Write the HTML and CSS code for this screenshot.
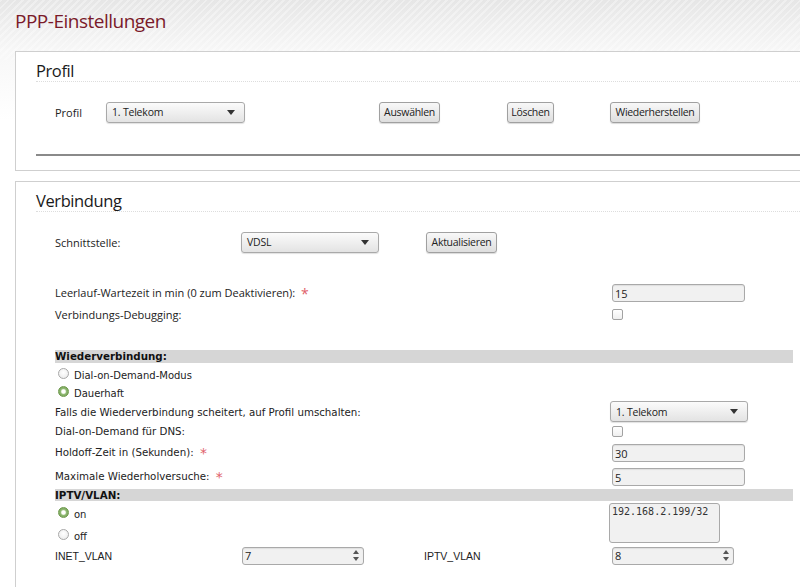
FILE: index.html
```html
<!DOCTYPE html>
<html lang="de">
<head>
<meta charset="utf-8">
<title>PPP-Einstellungen</title>
<link rel="stylesheet" href="styles.css">
</head>
<body>
<div class="page">
  <h1 class="title">PPP-Einstellungen</h1>

  <section class="box box-profil">
    <h2 class="box-head">Profil</h2>
    <div class="content">
      <div class="row row-profil">
        <span class="lbl">Profil</span>
        <div class="cell"><div class="select sel-profil"><span>1. Telekom</span><i class="arrow"></i></div></div>
        <div class="cell"><button class="btn btn-ausw">Auswählen</button></div>
        <div class="cell"><button class="btn btn-losch">Löschen</button></div>
        <div class="cell"><button class="btn btn-wied">Wiederherstellen</button></div>
      </div>
    </div>
    <div class="sep"></div>
  </section>

  <section class="box box-verb">
    <h2 class="box-head">Verbindung</h2>
    <div class="content">
      <div class="row row-schnitt">
        <span class="lbl">Schnittstelle:</span>
        <div class="cell"><div class="select sel-vdsl"><span>VDSL</span><i class="arrow"></i></div></div>
        <div class="cell"><button class="btn btn-akt">Aktualisieren</button></div>
      </div>

      <div class="row row-field row-leer">
        <span class="lbl">Leerlauf-Wartezeit in min (0 zum Deaktivieren): <span class="req">*</span></span>
        <div class="cell"><div class="input in-wide">15</div></div>
      </div>
      <div class="row row-field row-debug">
        <span class="lbl">Verbindungs-Debugging:</span>
        <div class="cell"><span class="check"></span></div>
      </div>

      <div class="bar bar-wieder">Wiederverbindung:</div>
      <div class="row row-radio r1 dv"><span class="radio"></span><span>Dial-on-Demand-Modus</span></div>
      <div class="row row-radio r2 dv"><span class="radio on"></span><span>Dauerhaft</span></div>

      <div class="row row-field row-falls dv">
        <span class="lbl">Falls die Wiederverbindung scheitert, auf Profil umschalten:</span>
        <div class="cell"><div class="select sel-falls"><span>1. Telekom</span><i class="arrow"></i></div></div>
      </div>
      <div class="row row-field row-dns dv">
        <span class="lbl">Dial-on-Demand für DNS:</span>
        <div class="cell"><span class="check"></span></div>
      </div>
      <div class="row row-field row-hold dv">
        <span class="lbl">Holdoff-Zeit in (Sekunden): <span class="req">*</span></span>
        <div class="cell"><div class="input in-wide">30</div></div>
      </div>
      <div class="row row-field row-max dv">
        <span class="lbl">Maximale Wiederholversuche: <span class="req">*</span></span>
        <div class="cell"><div class="input in-wide">5</div></div>
      </div>

      <div class="bar bar-iptv">IPTV/VLAN:</div>
      <div class="row row-iptv">
        <div class="radios">
          <div class="row-radio dv"><span class="radio on"></span><span>on</span></div>
          <div class="row-radio dv"><span class="radio"></span><span>off</span></div>
        </div>
        <div class="cell"><div class="textarea">192.168.2.199/32</div></div>
      </div>
      <div class="row row-vlan">
        <span class="lbl ar">INET_VLAN</span>
        <div class="cell"><div class="input num"><span class="val">7</span><span class="spin"><i class="up"></i><i class="down"></i></span></div></div>
        <span class="lbl ar">IPTV_VLAN</span>
        <div class="cell"><div class="input num"><span class="val">8</span><span class="spin"><i class="up"></i><i class="down"></i></span></div></div>
      </div>
    </div>
  </section>
</div>
</body>
</html>
```

FILE: styles.css
```css
html, body {
  margin: 0;
  padding: 0;
}
body {
  width: 800px;
  height: 587px;
  overflow: hidden;
  font-family: "Open Sans", "DejaVu Sans", sans-serif;
  color: #222;
  background:
    repeating-linear-gradient(135deg, rgba(255,255,255,0.35) 0 2px, rgba(0,0,0,0) 2px 5px),
    linear-gradient(#e6e6e6 0, #f7f7f7 50px, #fff 120px);
  background-repeat: no-repeat;
  background-size: 100% 60px, 100% 100%;
}
.page {
  padding-top: 9px;
}
.title {
  margin: 0 0 0 15px;
  height: 42px;
  font-size: 19px;
  font-weight: normal;
  color: #7a1a2a;
  line-height: 24px;
  letter-spacing: -0.5px;
}
.box {
  margin-left: 15px;
  width: 830px;
  background: #fff;
  border: 1px solid #cfcfcf;
  padding-left: 20px;
  box-sizing: border-box;
}
.box-profil {
  height: 120px;
}
.box-verb {
  margin-top: 10px;
  height: 420px;
}
.box-head {
  margin: 0;
  padding-top: 8px;
  height: 21px;
  font-size: 16.5px;
  font-weight: normal;
  line-height: 21px;
  letter-spacing: -0.4px;
  color: #1a1a1a;
  border-bottom: 1px dotted #ddd;
}
.content {
  padding-left: 19px;
  font-size: 11px;
}
.row {
  display: grid;
  align-items: center;
}
.cell {
  display: flex;
  align-items: center;
}
.lbl {
  white-space: nowrap;
}
.req {
  color: #e0606a;
  font-size: 14px;
  margin-left: 3px;
  vertical-align: -2px;
}
.dv {
  font-family: "DejaVu Sans", sans-serif;
  font-size: 10px;
}
.row-field.dv .lbl {
  font-size: 10.25px;
}
.ar {
  font-family: "Liberation Sans", Arial, sans-serif;
  font-size: 10.5px;
}

/* Profil row */
.row-profil {
  margin-top: 19px;
  height: 22px;
  grid-template-columns: 51px 273px 128px 103px auto;
}
.sep {
  margin-top: 31px;
  height: 2px;
  background: #8a8a8a;
}

/* Select */
.select {
  box-sizing: border-box;
  height: 21px;
  display: flex;
  align-items: center;
  justify-content: space-between;
  padding: 0 9px 0 5px;
  border: 1px solid #a9a9a9;
  border-radius: 3px;
  background: linear-gradient(#fbfbfb, #e3e3e3);
  box-shadow: 0 1px 1px rgba(0,0,0,0.12);
  font-family: "Open Sans", sans-serif;
  font-size: 10.5px;
  letter-spacing: -0.2px;
  color: #222;
}
.arrow {
  width: 0;
  height: 0;
  border-left: 4px solid transparent;
  border-right: 4px solid transparent;
  border-top: 5px solid #333;
}
.sel-profil { width: 139px; }
.sel-vdsl { width: 138px; }
.sel-falls { width: 138px; }

/* Buttons */
.btn {
  box-sizing: border-box;
  height: 21px;
  padding: 0;
  border: 1px solid #a0a0a0;
  border-radius: 3px;
  background: linear-gradient(#f8f8f8, #dedede);
  box-shadow: 0 1px 1px rgba(0,0,0,0.15);
  font-family: "Open Sans", sans-serif;
  font-size: 10.5px;
  letter-spacing: -0.3px;
  color: #222;
  line-height: 18px;
}
.btn-ausw { width: 61px; }
.btn-losch { width: 47px; }
.btn-wied { width: 90px; }
.btn-akt { width: 71px; }

/* Schnittstelle row */
.row-schnitt {
  margin-top: 19px;
  height: 22px;
  grid-template-columns: 186px 185px auto;
}

/* label + field rows */
.row-field {
  grid-template-columns: 557px auto;
}
.row-leer { margin-top: 30px; height: 20px; }
.row-debug { margin-top: 1px; height: 20px; }
.row-falls { margin-top: -1px; height: 21px; grid-template-columns: 555px auto; }
.row-dns { height: 18px; }
.row-hold { margin-top: 3px; height: 20px; }
.row-max { margin-top: 4px; height: 20px; }

.input {
  box-sizing: border-box;
  height: 18px;
  display: flex;
  align-items: center;
  padding-left: 2px;
  border: 1px solid #a9a9a9;
  border-radius: 3px;
  background: #f1f1f1;
  box-shadow: inset 0 1px 1px rgba(0,0,0,0.08);
  font-family: "Open Sans", sans-serif;
  font-size: 11px;
  color: #222;
}
.in-wide { width: 133px; }

.check {
  display: block;
  width: 11px;
  height: 11px;
  box-sizing: border-box;
  border: 1px solid #a2a2a2;
  border-radius: 2px;
  background: linear-gradient(#fff, #efefef);
}

/* Section bars */
.bar {
  width: 738px;
  background: #d6d6d6;
  font-family: "DejaVu Sans", sans-serif;
  font-weight: bold;
  font-size: 10.3px;
  color: #111;
  line-height: 13px;
  height: 13px;
}
.bar-wieder { margin-top: 26px; }
.bar-iptv { margin-top: 2px; height: 12px; line-height: 12px; }

/* Radios */
.row-radio {
  display: flex;
  align-items: center;
  gap: 5px;
  padding-left: 3px;
  height: 18px;
}
.row-radio.r1 {
  margin-top: 3px;
}
.radio {
  display: block;
  width: 11px;
  height: 11px;
  box-sizing: border-box;
  border-radius: 50%;
  border: 1px solid #a8a8a8;
  background: radial-gradient(circle at 50% 40%, #fff, #e8e8e8);
  margin-top: -4px;
}
.radio.on {
  border: 1px solid #6f9a4e;
  background: radial-gradient(circle, #fff 0 1.5px, #e6f0dc 2px, #8fb873 3px, #7aa65a 5px);
}

/* IPTV block */
.row-iptv {
  grid-template-columns: 554px auto;
  height: 44px;
  align-items: start;
}
.radios .row-radio {
  height: 22px;
}
.radios .row-radio:first-child {
  margin-top: 2px;
}
.textarea {
  margin-top: 2px;
  box-sizing: border-box;
  width: 111px;
  height: 40px;
  border: 1px solid #a9a9a9;
  border-radius: 3px;
  background: #f1f1f1;
  padding: 1px 2px;
  font-family: "DejaVu Sans Mono", "Liberation Mono", monospace;
  font-size: 10px;
  line-height: 13px;
  color: #333;
}

/* VLAN row */
.row-vlan {
  margin-top: 1px;
  height: 19px;
  grid-template-columns: 187px 182px 188px auto;
}
.num {
  width: 122px;
  justify-content: space-between;
  padding-right: 4px;
}
.spin {
  display: flex;
  flex-direction: column;
  gap: 3px;
}
.up, .down {
  display: block;
  width: 0;
  height: 0;
  border-left: 3px solid transparent;
  border-right: 3px solid transparent;
}
.up { border-bottom: 4px solid #555; }
.down { border-top: 4px solid #555; }
```
